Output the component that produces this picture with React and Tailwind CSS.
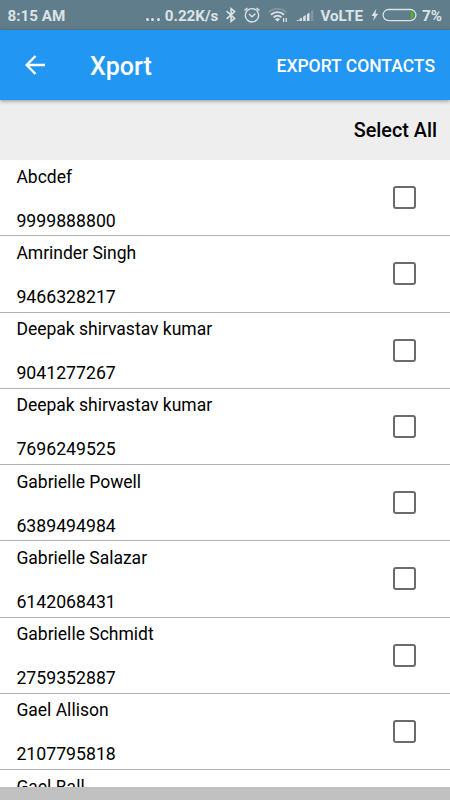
const CONTACTS = [
  { name: "Abcdef", phone: "9999888800" },
  { name: "Amrinder Singh", phone: "9466328217" },
  { name: "Deepak shirvastav kumar", phone: "9041277267" },
  { name: "Deepak shirvastav kumar", phone: "7696249525" },
  { name: "Gabrielle Powell", phone: "6389494984" },
  { name: "Gabrielle Salazar", phone: "6142068431" },
  { name: "Gabrielle Schmidt", phone: "2759352887" },
  { name: "Gael Allison", phone: "2107795818" },
  { name: "Gael Ball", phone: "" },
];

function BluetoothIcon() {
  return (
    <svg className="ml-[8px] h-4 w-[10px]" viewBox="0 0 10 16" fill="none" stroke="currentColor" strokeWidth="1.6">
      <path d="M.6 4.2 8.6 11.4 5.1 14.3V1.7L8.6 4.6.6 11.8" />
    </svg>
  );
}

function AlarmIcon() {
  return (
    <svg className="ml-[8px] h-4 w-4" viewBox="0 0 16 16" fill="none" stroke="currentColor" strokeWidth="1.4">
      <circle cx="8" cy="8.3" r="6.7" />
      <path d="M5 7 8 9.7l3.4-2.9M.5 3.6 3.5.9M15.5 3.6 12.5.9" />
    </svg>
  );
}

function WifiIcon() {
  return (
    <svg className="ml-[8px] h-4 w-5" viewBox="0 0 20 16" fill="none" stroke="currentColor" strokeWidth="1.9">
      <path d="M.8 5.2C5.6.5 13.4.5 18.2 5.2" opacity=".25" />
      <path d="M3 7.8c3.7-3.6 9.3-3.6 13 0M5.6 10.4c2.3-2.2 5.5-2.2 7.8 0" />
      <path d="M7 12.2c1.5-1.2 3.5-1.2 5 0l-2.5 2.4z" fill="currentColor" stroke="none" />
      <path d="M15.6 11v4M18.2 11v4" strokeWidth="1.3" />
    </svg>
  );
}

function SignalIcon() {
  return (
    <svg className="ml-[8px] h-4 w-[18px]" viewBox="0 0 18 16" fill="currentColor">
      <path d="M0 14 2.6 12.5V14H0zM3.4 11.9 5.9 10.4V14H3.4zM7.1 9.7 9.7 8.1V14H7.1zM10.9 7.3 13.5 5.6V14h-2.6z" />
      <path d="M14.8 4.6 17.4 2.6V14h-2.6z" opacity=".25" />
    </svg>
  );
}

function BatteryIcon() {
  return (
    <svg className="ml-[8px] h-4 w-[46px]" viewBox="0 0 46 16" fill="none">
      <path d="M5.3 1.8.5 8.9h2.8L2 14.1 7.2 6.8H4.4z" fill="currentColor" />
      <path d="M39.8 4.6h1c2.4 1.4 2.4 5.6 0 7h-1z" fill="#46c30b" />
      <rect x="12.1" y="2.5" width="32.8" height="11.2" rx="5.6" stroke="currentColor" strokeWidth="1.3" />
    </svg>
  );
}

function StatusBar() {
  return (
    <div className="flex h-[30px] shrink-0 items-center bg-[#607d8b] pr-[8px] pl-[7.5px] text-[15.2px] font-bold text-[#dce3e6]">
      <span className="pt-[2px]">8:15 AM</span>
      <span className="ml-auto flex items-end gap-[2.5px] pt-[8px]">
        <i className="h-[3px] w-[3px] rounded-full bg-current" />
        <i className="h-[3px] w-[3px] rounded-full bg-current" />
        <i className="h-[3px] w-[3px] rounded-full bg-current" />
      </span>
      <span className="ml-[5px] pt-[2px]">0.22K/s</span>
      <BluetoothIcon />
      <AlarmIcon />
      <WifiIcon />
      <SignalIcon />
      <span className="ml-[6px] pt-[2px]">VoLTE</span>
      <BatteryIcon />
      <span className="ml-[5px] pt-[2px]">7%</span>
    </div>
  );
}

function AppBar() {
  return (
    <header className="relative z-10 flex h-[70px] shrink-0 items-center bg-[#2196f3] pr-[15px] pl-[25px] text-white shadow-[0_1px_4px_rgba(0,0,0,0.4)]">
      <button type="button" aria-label="Back">
        <svg className="h-5 w-5" viewBox="0 0 20 20" fill="none" stroke="currentColor" strokeWidth="2.4">
          <path d="M20 10H2M10.5 1 1.7 10l8.8 9" />
        </svg>
      </button>
      <h1 className="ml-[45px] pt-[4px] text-[25px] font-medium">Xport</h1>
      <button type="button" className="ml-auto pt-[2px] text-[17.5px] font-medium">EXPORT CONTACTS</button>
    </header>
  );
}

function ContactRow({ name, phone }) {
  return (
    <li className="flex h-[76.28px] shrink-0 items-center justify-between border-b border-[#b0b0b0] pr-[34px] pl-[16.4px]">
      <div className="flex h-full flex-col gap-[23px] pt-[6.6px] leading-[21px]">
        <span className="text-[17.5px]">{name}</span>
        <span className="text-[17.7px]">{phone}</span>
      </div>
      <input type="checkbox" className="h-[23px] w-[23px] appearance-none rounded-[3px] border-2 border-[#6b6b6b]" />
    </li>
  );
}

export default function App() {
  return (
    <div className="flex h-screen w-full flex-col overflow-hidden bg-white font-[Roboto,sans-serif] text-black">
      <StatusBar />
      <AppBar />
      <div className="flex h-[60px] shrink-0 items-center justify-end bg-[#eeeeee] pt-[2px] pr-[13px] text-[19.8px] font-medium">
        <span>Select All</span>
      </div>
      <ul className="flex min-h-0 flex-1 flex-col overflow-hidden">
        {CONTACTS.map((c, i) => (
          <ContactRow key={i} name={c.name} phone={c.phone} />
        ))}
      </ul>
      <div className="h-[13px] shrink-0 bg-[#c1c1c1]" />
    </div>
  );
}
